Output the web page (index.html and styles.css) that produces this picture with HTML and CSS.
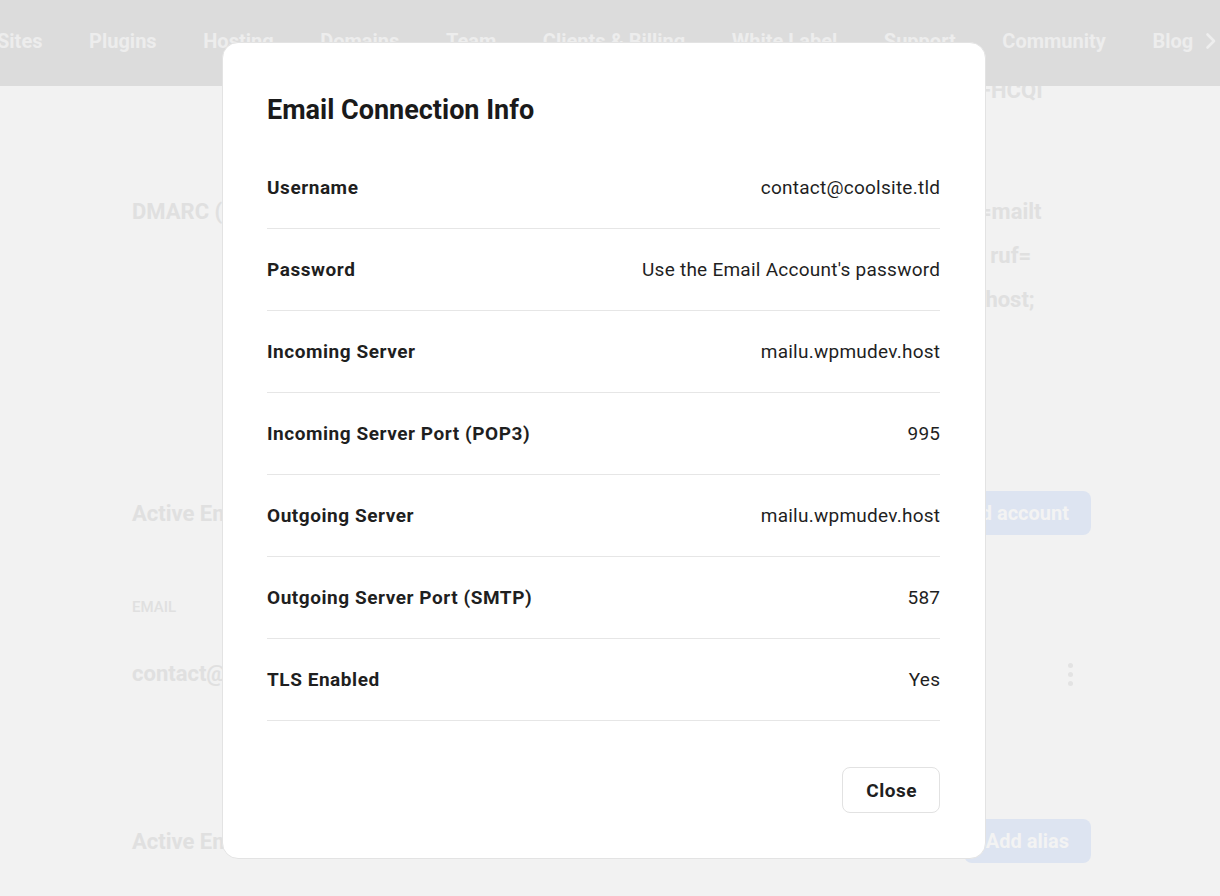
FILE: index.html
```html
<!DOCTYPE html>
<html lang="en">
<head>
<meta charset="utf-8">
<title>Email Connection Info</title>
<link rel="stylesheet" href="styles.css">
</head>
<body>
<div class="page">
  <nav class="topnav">
    <ul class="nav-list">
      <li>Sites</li>
      <li>Plugins</li>
      <li>Hosting</li>
      <li>Domains</li>
      <li>Team</li>
      <li>Clients &amp; Billing</li>
      <li>White Label</li>
      <li>Support</li>
      <li>Community</li>
      <li>Blog</li>
    </ul>
    <span class="nav-more">
      <svg width="12" height="18" viewBox="0 0 12 18"><path d="M2.5 2.5 L9 9 L2.5 15.5" fill="none" stroke="#eeeeee" stroke-width="2.6" stroke-linecap="round" stroke-linejoin="round"/></svg>
    </span>
  </nav>

  <main class="content">
    <div class="rec-row first">
      <span class="rec-label"></span>
      <span class="rec-value">FHCQI</span>
    </div>

    <div class="rec-row dmarc">
      <span class="rec-label">DMARC (TXT)</span>
      <span class="rec-value">
        <span class="line">=mailt</span>
        <span class="line">; ruf=</span>
        <span class="line">.host;</span>
      </span>
    </div>

    <div class="section-head accounts">
      <h2 class="section-title">Active Email Accounts</h2>
      <button class="btn-primary">Add account</button>
    </div>

    <div class="col-head">EMAIL</div>

    <div class="account-row">
      <span class="account-email">contact@coolsite.tld</span>
      <span class="kebab"><i></i><i></i><i></i></span>
    </div>

    <div class="section-head aliases">
      <h2 class="section-title">Active Email Aliases</h2>
      <button class="btn-primary">Add alias</button>
    </div>
  </main>
</div>

<div class="overlay">
  <div class="modal" role="dialog" aria-labelledby="modal-title">
    <h1 class="modal-title" id="modal-title">Email Connection Info</h1>
    <dl class="info-list">
      <div class="info-row"><dt>Username</dt><dd>contact@coolsite.tld</dd></div>
      <div class="info-row"><dt>Password</dt><dd>Use the Email Account's password</dd></div>
      <div class="info-row"><dt>Incoming Server</dt><dd>mailu.wpmudev.host</dd></div>
      <div class="info-row"><dt>Incoming Server Port (POP3)</dt><dd>995</dd></div>
      <div class="info-row"><dt>Outgoing Server</dt><dd>mailu.wpmudev.host</dd></div>
      <div class="info-row"><dt>Outgoing Server Port (SMTP)</dt><dd>587</dd></div>
      <div class="info-row"><dt>TLS Enabled</dt><dd>Yes</dd></div>
    </dl>
    <div class="modal-footer">
      <button class="btn-close">Close</button>
    </div>
  </div>
</div>
</body>
</html>
```

FILE: styles.css
```css
* { box-sizing: border-box; }

html, body {
  margin: 0;
  padding: 0;
}

body {
  background: #f2f2f2;
  font-family: Roboto, "Liberation Sans", Arial, sans-serif;
  color: #1f1f1f;
  width: 1220px;
  height: 896px;
  overflow: hidden;
}

/* ---------- background page ---------- */
.page {
  position: relative;
}

.topnav {
  position: sticky;
  top: 0;
  z-index: 2;
  height: 86px;
  background: #dcdcdc;
  display: flex;
  align-items: center;
  overflow: hidden;
}

.nav-list {
  list-style: none;
  margin: 0 0 4px -3px;
  padding: 0;
  display: flex;
  gap: 46.6px;
  white-space: nowrap;
}

.nav-list li {
  font-size: 20px;
  font-weight: 700;
  color: #ededed;
  line-height: 24px;
}

.nav-more {
  position: absolute;
  right: 3px;
  top: 32px;
  display: flex;
}

.content {
  position: relative;
  z-index: 1;
  margin-left: 132px;
  width: 959px;
  font-size: 22px;
  font-weight: 700;
  color: #e0e0e0;
}

.rec-row {
  display: flex;
  line-height: 30px;
}

.rec-row.first {
  margin-top: -10px;
}

.rec-label {
  width: 847px;
  flex: none;
}

.rec-value {
  display: flex;
  flex-direction: column;
  white-space: nowrap;
}

.rec-row.dmarc {
  margin-top: 84px;
  line-height: 44px;
}

.section-head {
  display: flex;
  align-items: center;
  justify-content: space-between;
  height: 44px;
}

.section-head.accounts { margin-top: 169px; }
.section-head.aliases { margin-top: 130px; }

.section-title {
  margin: 0;
  font-size: 22px;
  font-weight: 700;
}

.btn-primary {
  font-family: inherit;
  font-size: 20px;
  font-weight: 700;
  color: #f3f3f3;
  background: #dde4f1;
  border: none;
  border-radius: 8px;
  height: 44px;
  padding: 0 22px;
}

.col-head {
  margin-top: 62px;
  font-size: 15px;
  font-weight: 500;
  line-height: 20px;
}

.account-row {
  margin-top: 42px;
  display: flex;
  align-items: center;
  justify-content: space-between;
  line-height: 30px;
}

.kebab {
  display: flex;
  flex-direction: column;
  gap: 4px;
  margin-right: 18px;
}

.kebab i {
  display: block;
  width: 5px;
  height: 5px;
  border-radius: 50%;
  background: #e3e3e3;
}

/* ---------- modal ---------- */
.overlay {
  position: fixed;
  inset: 0;
  z-index: 10;
}

.modal {
  position: absolute;
  top: 42px;
  left: 222px;
  width: 764px;
  height: 817px;
  background: #ffffff;
  border: 1px solid #e3e3e3;
  border-radius: 16px;
  padding: 51px 45px 45px 44px;
  display: flex;
  flex-direction: column;
}

.modal-title {
  margin: 0;
  font-size: 27px;
  font-weight: 700;
  line-height: 32px;
  color: #1a1a1a;
}

.info-list {
  margin: 21px 0 0;
  padding: 0;
}

.info-row {
  display: flex;
  align-items: center;
  justify-content: space-between;
  height: 82px;
  border-bottom: 1px solid #e6e6e6;
  font-size: 19px;
  line-height: 24px;
  color: #1f1f1f;
}

.info-row dt {
  font-weight: 700;
  letter-spacing: 0.55px;
}

.info-row dd {
  margin: 0 -0.25px 0 0;
  font-weight: 400;
  text-align: right;
  letter-spacing: 0.25px;
}

.modal-footer {
  margin-top: auto;
  display: flex;
  justify-content: flex-end;
}

.btn-close {
  font-family: inherit;
  font-size: 19px;
  font-weight: 700;
  letter-spacing: 0.5px;
  color: #1f1f1f;
  background: #ffffff;
  border: 1px solid #e2e2e2;
  border-radius: 8px;
  height: 46px;
  padding: 0 22px 0 23px;
}
```
